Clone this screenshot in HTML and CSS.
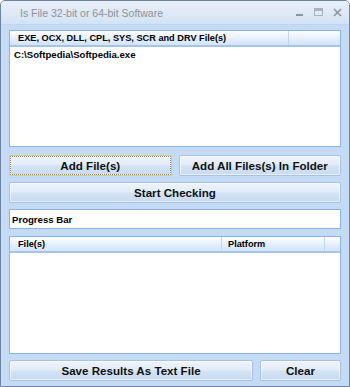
FILE: index.html
```html
<!DOCTYPE html>
<html lang="en">
<head>
  <meta charset="UTF-8">
  <title>Is File 32-bit or 64-bit Software</title>
  <link rel="stylesheet" href="styles.css">
</head>
<body>
  <div class="window">
    <div class="titlebar">
      <span class="title">Is File 32-bit or 64-bit Software</span>
      <div class="caption-buttons">
        <svg width="10" height="10" viewBox="0 0 10 10"><rect x="1" y="6" width="7" height="2" fill="#8d96a3"/></svg>
        <svg width="10" height="10" viewBox="0 0 10 10"><rect x="0.5" y="0.5" width="8" height="7" fill="none" stroke="#a9b2bf"/><rect x="1" y="1" width="7" height="2" fill="#a9b2bf"/></svg>
        <svg width="10" height="10" viewBox="0 0 10 10"><path d="M1 1 L8 8 M8 1 L1 8" stroke="#8d96a3" stroke-width="1.6"/></svg>
      </div>
    </div>

    <div class="client">
      <div class="listview files">
        <div class="lv-header">
          <div class="col col-main">EXE, OCX, DLL, CPL, SYS, SCR and DRV File(s)</div>
          <div class="col col-rest"></div>
        </div>
        <div class="lv-body">
          <div class="row">C:\Softpedia\Softpedia.exe</div>
        </div>
      </div>

      <div class="btn-row">
        <button class="btn focused">Add File(s)</button>
        <button class="btn wide">Add All Files(s) In Folder</button>
      </div>

      <button class="btn full">Start Checking</button>

      <div class="progress">Progress Bar</div>

      <div class="listview results">
        <div class="lv-header">
          <div class="col col-file">File(s)</div>
          <div class="col col-platform">Platform</div>
          <div class="col col-rest"></div>
        </div>
        <div class="lv-body"></div>
      </div>

      <div class="btn-row bottom">
        <button class="btn save">Save Results As Text File</button>
        <button class="btn clear">Clear</button>
      </div>
    </div>
  </div>
</body>
</html>
```

FILE: styles.css
```css
* {
  box-sizing: border-box;
}

html, body {
  margin: 0;
  padding: 0;
  background: #ffffff;
}

.window {
  width: 350px;
  height: 387px;
  display: flex;
  flex-direction: column;
  border: 1px solid #6d84a3;
  border-radius: 5px 5px 0 0;
  background: #c4daf5;
  font-family: "Liberation Sans", Arial, sans-serif;
  overflow: hidden;
}

.titlebar {
  height: 24px;
  display: flex;
  align-items: center;
  justify-content: space-between;
  padding: 0 6px 0 19px;
  background: linear-gradient(#e8eff9, #dde8f5 60%, #d2e2f5);
  border-bottom: 1px solid #c0d4ee;
}

.title {
  font-size: 10.5px;
  color: #8b929c;
}

.caption-buttons {
  display: flex;
  gap: 9px;
  align-items: center;
}

.client {
  flex: 1;
  display: flex;
  flex-direction: column;
  padding: 5px 8px 0 8px;
}

.listview {
  background: #ffffff;
  border: 1px solid #8eb2df;
  display: flex;
  flex-direction: column;
}

.files {
  height: 117px;
}

.results {
  height: 118px;
  margin-top: 7px;
}

.lv-header {
  display: flex;
  height: 16px;
  background: linear-gradient(#ffffff, #e6f0fc 50%, #d3e4fa);
  border-bottom: 2px solid #a7c3e8;
  font-size: 9.2px;
  font-weight: bold;
  color: #000000;
}

.col {
  padding: 2px 0 0 8px;
  border-right: 1px solid #c1d6f1;
  white-space: nowrap;
}

.files .col-main {
  width: 279px;
}

.col-rest {
  flex: 1;
  border-right: none;
}

.col-file {
  width: 212px;
}

.col-platform {
  width: 103px;
  padding-left: 6px;
}

.lv-body {
  flex: 1;
}

.row {
  font-size: 9.6px;
  font-weight: bold;
  padding: 2px 0 0 4px;
}

.btn {
  font-family: "Liberation Sans", Arial, sans-serif;
  font-weight: bold;
  font-size: 11.6px;
  color: #111111;
  height: 21px;
  padding: 0;
  border: 1px solid #a9c2e2;
  border-radius: 2px;
  background: linear-gradient(#eef4fc, #e2ecf8 45%, #d3e2f5 55%, #c9dbf2);
  box-shadow: inset 0 0 0 1px rgba(255, 255, 255, 0.55);
}

.btn-row {
  display: flex;
  gap: 7px;
  margin-top: 8px;
}

.btn-row .btn {
  flex: 1;
}

.btn.focused {
  border: 1px solid #d8c98f;
  outline: 1px dotted #8c8c70;
  outline-offset: -2px;
}

.btn.full {
  width: 100%;
  margin-top: 6px;
}

.progress {
  margin-top: 6px;
  height: 20px;
  background: #ffffff;
  border: 1px solid #8eb2df;
  font-size: 9.6px;
  font-weight: bold;
  padding: 4px 0 0 2px;
}

.btn-row.bottom {
  margin-top: 6px;
}

.btn-row.bottom .save {
  flex: 0 0 244px;
}
```
